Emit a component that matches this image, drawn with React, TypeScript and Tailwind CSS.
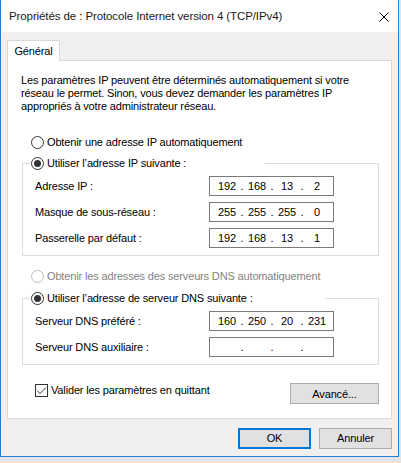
import { Fragment } from "react";

function Radio({ checked, disabled }: { checked?: boolean; disabled?: boolean }) {
  return (
    <span
      className={`flex size-[13px] shrink-0 items-center justify-center rounded-full border bg-white ${
        disabled ? "border-[#bcbcbc]" : "border-[#333333]"
      }`}
    >
      {checked ? <span className="size-[7px] rounded-full bg-[#333333]" /> : null}
    </span>
  );
}

function IpBox({ parts }: { parts: string[] }) {
  return (
    <div className="flex h-[20px] w-[125px] items-center border border-[#7a7a7a] bg-white pl-[4px]">
      {parts.map((part, i) => (
        <Fragment key={i}>
          {i > 0 ? <span className="w-[4px] text-center">.</span> : null}
          <span className="w-[26px] text-center">{part}</span>
        </Fragment>
      ))}
    </div>
  );
}

function FieldRow({ label, parts }: { label: string; parts: string[] }) {
  return (
    <div className="flex h-[20px] items-center">
      <span className="w-[174px]">{label}</span>
      <IpBox parts={parts} />
    </div>
  );
}

export default function App() {
  return (
    <div className="h-[463px] w-[401px] bg-[#e4e4e4] font-['Liberation_Sans',Arial,sans-serif] text-[11px] tracking-[-0.15px] text-black">
      <div className="flex h-[457px] w-[399px] flex-col border-x border-b border-[#1a80d8] bg-[#f0f0f0]">
        {/* title bar */}
        <div className="flex h-[32px] shrink-0 items-center justify-between bg-white pl-[8px] pr-[9px]">
          <span className="pt-[2px] text-[11.5px] tracking-[-0.1px] text-[#1a1a1a]">
            Propriétés de : Protocole Internet version 4 (TCP/IPv4)
          </span>
          <svg width="10" height="10" viewBox="0 0 10 10" className="mb-[-2px]">
            <path d="M0.5 0.5 L9.5 9.5 M9.5 0.5 L0.5 9.5" stroke="#000" strokeWidth="1" />
          </svg>
        </div>

        <div className="flex flex-col px-[6px] pt-[8px]">
          <div className="relative z-10 flex h-[21px] w-[53px] items-center justify-center border-x border-t border-[#d9d9d9] bg-white pt-[1px]">
            Général
          </div>
          <div className="-mt-[1px] flex flex-col border border-[#d9d9d9] bg-white pb-[14px]">
            <p className="ml-[13px] mt-[13px] leading-[13px]">
              Les paramètres IP peuvent être déterminés automatiquement si votre
              <br />
              réseau le permet. Sinon, vous devez demander les paramètres IP
              <br />
              appropriés à votre administrateur réseau.
            </p>

            <div className="ml-[23px] mt-[21px] flex h-[16px] items-center gap-[3px]">
              <Radio />
              <span>Obtenir une adresse IP automatiquement</span>
            </div>

            <div className="relative z-10 ml-[22px] mt-[5px] flex h-[16px] w-[235px] items-center gap-[3px] bg-white pl-[1px]">
              <Radio checked />
              <span>Utiliser l’adresse IP suivante :</span>
            </div>
            <div className="-mt-[8px] ml-[14px] flex w-[357px] flex-col gap-[6px] border border-[#dcdcdc] pb-[7px] pl-[12px] pt-[12px]">
              <FieldRow label="Adresse IP :" parts={["192", "168", "13", "2"]} />
              <FieldRow label="Masque de sous-réseau :" parts={["255", "255", "255", "0"]} />
              <FieldRow label="Passerelle par défaut :" parts={["192", "168", "13", "1"]} />
            </div>

            <div className="ml-[23px] mt-[12px] flex h-[16px] items-center gap-[3px] text-[#838383]">
              <Radio disabled />
              <span>Obtenir les adresses des serveurs DNS automatiquement</span>
            </div>

            <div className="relative z-10 ml-[22px] mt-[6px] flex h-[16px] w-[295px] items-center gap-[3px] bg-white pl-[1px]">
              <Radio checked />
              <span>Utiliser l’adresse de serveur DNS suivante :</span>
            </div>
            <div className="-mt-[8px] ml-[14px] flex w-[357px] flex-col gap-[6px] border border-[#dcdcdc] pb-[7px] pl-[12px] pt-[12px]">
              <FieldRow label="Serveur DNS préféré :" parts={["160", "250", "20", "231"]} />
              <FieldRow label="Serveur DNS auxiliaire :" parts={["", "", "", ""]} />
            </div>

            <div className="ml-[27px] mr-[12px] mt-[18px] flex items-start justify-between">
              <label className="mt-[1px] flex h-[13px] items-center gap-[3px]">
                <span className="flex size-[13px] items-center justify-center border border-[#333333] bg-white">
                  <svg width="11" height="11" viewBox="0 0 11 11">
                    <path d="M1 5.5 L4 8.5 L10 2.5" fill="none" stroke="#333" strokeWidth="1" />
                  </svg>
                </span>
                <span>Valider les paramètres en quittant</span>
              </label>
              <button
                type="button"
                className="flex h-[21px] w-[89px] items-center justify-center border border-[#adadad] bg-[#e1e1e1] pt-[1px]"
              >
                Avancé...
              </button>
            </div>
          </div>

          <div className="mt-[9px] flex justify-end gap-[8px]">
            <button
              type="button"
              className="flex h-[21px] w-[73px] items-center justify-center border-2 border-[#0078d7] bg-[#e1e1e1]"
            >
              OK
            </button>
            <button
              type="button"
              className="flex h-[21px] w-[73px] items-center justify-center border border-[#adadad] bg-[#e1e1e1]"
            >
              Annuler
            </button>
          </div>
        </div>
      </div>
    </div>
  );
}
